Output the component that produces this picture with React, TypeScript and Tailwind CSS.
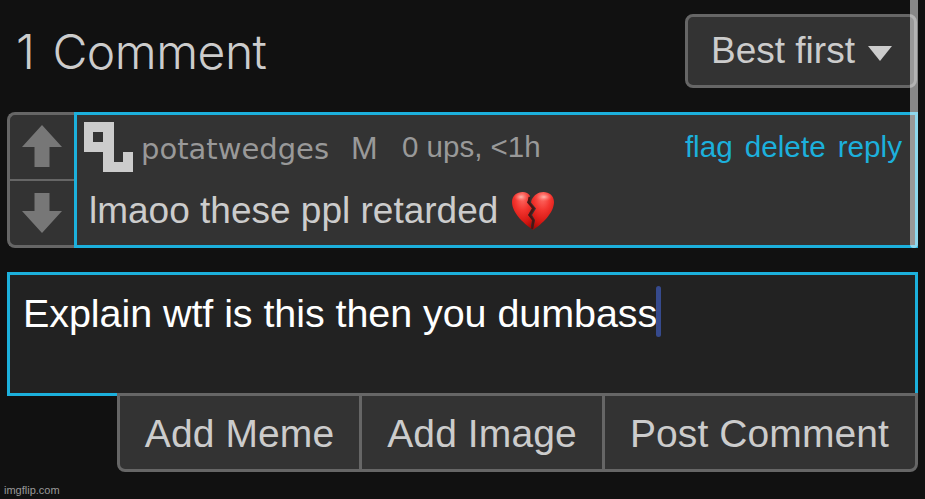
import React from "react";

interface ActionButton {
	label: string;
	className: string;
}

const commentActions = ["flag", "delete", "reply"];

const formButtons: ActionButton[] = [
	{ label: "Add Meme", className: "w-[239px]" },
	{ label: "Add Image", className: "w-[243px] border-l-[3px]" },
	{ label: "Post Comment", className: "flex-1 border-l-[3px] pr-px" },
];

function VoteArrow({ down = false }: { down?: boolean }) {
	if (down) {
		return (
			<svg width="40" height="40" viewBox="0 0 40 40">
				<path d="M20 40 L40 18 H27.5 V0 H12.5 V18 H0 Z" fill="#777" />
			</svg>
		);
	}
	return (
		<svg width="40" height="42" viewBox="0 0 40 42">
			<path d="M20 0 L40 22 H27.5 V42 H12.5 V22 H0 Z" fill="#777" />
		</svg>
	);
}

// Pixel style rank icon shown before the username
function RankIcon() {
	return (
		<svg width="49" height="50" viewBox="0 0 49 50" shapeRendering="crispEdges">
			<path fillRule="evenodd" d="M0 0 H30 V40 H39 V30 H49 V50 H19 V30 H0 Z M9 10 V20 H19 V10 Z" fill="#ccc" />
		</svg>
	);
}

function BrokenHeart() {
	return (
		<svg width="44" height="40" viewBox="0 0 44 40">
			<defs>
				<radialGradient id="heart" cx="0.5" cy="0.12" r="0.9">
					<stop offset="0" stopColor="#ff7069" />
					<stop offset="0.4" stopColor="#f3352f" />
					<stop offset="0.75" stopColor="#d61813" />
					<stop offset="1" stopColor="#a80906" />
				</radialGradient>
				<radialGradient id="shine">
					<stop offset="0" stopColor="#ffc0b8" stopOpacity="0.9" />
					<stop offset="1" stopColor="#ff6a60" stopOpacity="0" />
				</radialGradient>
			</defs>
			<path
				d="M22 39 C15 34 1 23 1 11 C1 4.500 6 1 11.500 1 C15 1 17.500 2.500 19 5 L16 11.500 L21 17 L17 24 L21 29 L20 35 Z"
				fill="url(#heart)"
			/>
			<path
				d="M22 39 C31 33 43 22 43 11 C43 4.500 38 1 32.500 1 C27 1 23 4 20.500 9 L20 11.500 L25 17.500 L21 24 L24 29 Z"
				fill="url(#heart)"
			/>
			<ellipse cx="10" cy="6" rx="7" ry="4.500" fill="url(#shine)" />
			<ellipse cx="33" cy="6" rx="8" ry="4.500" fill="url(#shine)" />
			<path d="M18.500 6 L17.500 11.500 L22.500 17.500 L18.500 24 L22.500 29.500 L21 38" fill="none" stroke="#4a1512" strokeWidth="2" />
		</svg>
	);
}

export default function App() {
	return (
		<div className="relative flex h-[499px] w-[925px] flex-col overflow-hidden bg-[#111] font-['Liberation_Sans',Arial,sans-serif] whitespace-nowrap text-[#ccc]">
			{/* Header */}
			<header className="flex h-[112px] shrink-0 items-start justify-between pt-[14px] pr-2 pl-4">
				<h1 className="font-[Inter,sans-serif] text-[48px] leading-[75px] font-light tracking-[-0.5px] [word-spacing:5px]">1 Comment</h1>
				<button className="flex h-[74px] w-[232px] items-center rounded-lg border-[3px] border-[#666] bg-[#333] pl-[23px] text-[37px]">
					<span>Best first</span>
					<svg width="24" height="15" viewBox="0 0 24 15" className="mt-1 ml-[13px]">
						<path d="M0 0 H24 L12 15 Z" fill="#ccc" />
					</svg>
				</button>
			</header>

			{/* Comment */}
			<section className="mx-[7px] flex h-[136px] shrink-0">
				<div className="flex w-[67px] flex-col rounded-l-lg border-[3px] border-r-0 border-[#666] bg-[#333]">
					<div className="flex h-[66px] items-center justify-center border-b-2 border-[#666] pr-px pb-[2px]">
						<VoteArrow />
					</div>
					<div className="flex flex-1 items-center justify-center pr-px">
						<VoteArrow down />
					</div>
				</div>
				<div className="flex-1 border-[3px] border-[#1cb0dc] bg-[#333]">
					<div className="flex h-[66px] items-start pt-[7px] pr-[13px] pl-[7px]">
						<RankIcon />
						<span className="ml-2 w-[210px] font-['DejaVu_Sans',sans-serif] text-[29px] leading-[54px] text-[#999]">potatwedges</span>
						<span className="w-[51px] text-[32px] leading-[53px] text-[#999]">M</span>
						<span className="text-[29.500px] leading-[50px] text-[#999]">0 ups, &lt;1h</span>
						<div className="ml-auto flex gap-3 text-[29.700px] leading-[50px] text-[#1cb0dc]">
							{commentActions.map((action) => (
								<a key={action} href="#">
									{action}
								</a>
							))}
						</div>
					</div>
					<p className="flex h-[60px] items-center gap-[13px] pl-3 text-[37px]">
						<span>lmaoo these ppl retarded</span>
						<BrokenHeart />
					</p>
				</div>
			</section>

			{/* Reply form */}
			<form className="mx-[7px] mt-6 flex shrink-0 flex-col">
				<div className="flex h-[124px] items-start border-[3px] border-[#1cb0dc] bg-[#222] pt-[11px] pl-[13px] text-white">
					<span className="text-[39.500px] leading-[54px] tracking-[-0.07px]">Explain wtf is this then you dumbass</span>
					<span className="-ml-px h-[51px] w-[5px] rounded-sm bg-[#364a8d]" />
				</div>
				<div className="-mt-[3px] ml-[110px] flex h-[79px] overflow-hidden rounded-b-lg border-[3px] border-[#666] bg-[#333]">
					{formButtons.map((button) => (
						<button key={button.label} type="button" className={`border-[#666] pt-1 text-[39px] tracking-[0.1px] ${button.className}`}>
							{button.label}
						</button>
					))}
				</div>
			</form>

			<footer className="mt-auto pb-[2px] pl-1 text-[11px] leading-[14px] text-[#999]">imgflip.com</footer>

			{/* Overlay scrollbar */}
			<div className="absolute top-0 left-[910px] h-[248px] w-2 rounded-b bg-white/50" />
		</div>
	);
}
